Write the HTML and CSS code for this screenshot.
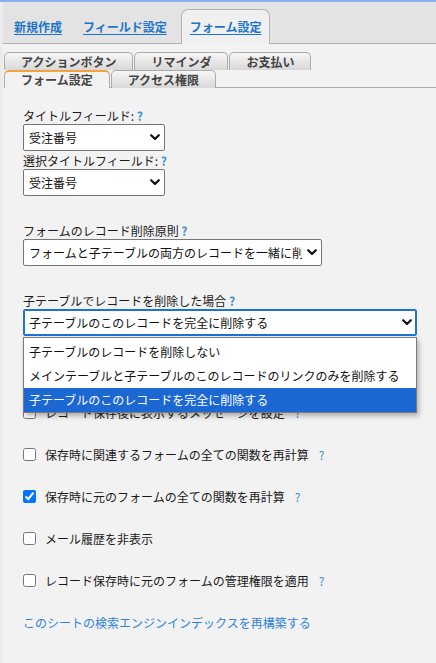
FILE: index.html
```html
<!DOCTYPE html>
<html lang="ja">
<head>
<meta charset="utf-8">
<title>フォーム設定</title>
<link rel="stylesheet" href="styles.css">
</head>
<body>
<div class="topline"></div>
<div class="page">
  <nav class="maintabs">
    <a class="mtab" href="#">新規作成</a>
    <a class="mtab" href="#">フィールド設定</a>
    <a class="mtab active" href="#">フォーム設定</a>
  </nav>

  <div class="subtabs">
    <div class="srow">
      <span class="stab">アクションボタン</span>
      <span class="stab">リマインダ</span>
      <span class="stab">お支払い</span>
    </div>
    <div class="srow srow-last">
      <span class="stab active">フォーム設定</span>
      <span class="stab">アクセス権限</span>
    </div>
  </div>

  <main class="content">
    <div class="field">
      <div class="label">タイトルフィールド: <span class="help">?</span></div>
      <div class="select w-sm"><span class="val">受注番号</span><svg class="chev" width="10" height="7" viewBox="0 0 10 7"><path d="M1.2 1.2 L5 5 L8.8 1.2" fill="none" stroke="#111" stroke-width="2.2" stroke-linecap="round" stroke-linejoin="round"/></svg></div>
      <div class="label label-2">選択タイトルフィールド: <span class="help">?</span></div>
      <div class="select w-sm"><span class="val">受注番号</span><svg class="chev" width="10" height="7" viewBox="0 0 10 7"><path d="M1.2 1.2 L5 5 L8.8 1.2" fill="none" stroke="#111" stroke-width="2.2" stroke-linecap="round" stroke-linejoin="round"/></svg></div>
    </div>

    <div class="field gap">
      <div class="label">フォームのレコード削除原則 <span class="help">?</span></div>
      <div class="select w-md"><span class="val">フォームと子テーブルの両方のレコードを一緒に削除する</span><svg class="chev" width="10" height="7" viewBox="0 0 10 7"><path d="M1.2 1.2 L5 5 L8.8 1.2" fill="none" stroke="#111" stroke-width="2.2" stroke-linecap="round" stroke-linejoin="round"/></svg></div>
    </div>

    <div class="field gap">
      <div class="label">子テーブルでレコードを削除した場合 <span class="help">?</span></div>
      <div class="select-wrap">
        <div class="select w-lg focused"><span class="val">子テーブルのこのレコードを完全に削除する</span><svg class="chev" width="10" height="7" viewBox="0 0 10 7"><path d="M1.2 1.2 L5 5 L8.8 1.2" fill="none" stroke="#111" stroke-width="2.2" stroke-linecap="round" stroke-linejoin="round"/></svg></div>
        <ul class="dropdown">
          <li>子テーブルのレコードを削除しない</li>
          <li>メインテーブルと子テーブルのこのレコードのリンクのみを削除する</li>
          <li class="sel">子テーブルのこのレコードを完全に削除する</li>
        </ul>
      </div>
    </div>

    <div class="checks">
      <label class="check"><input type="checkbox"><span>レコード保存後に表示するメッセージを設定<span class="help">?</span></span></label>
      <label class="check"><input type="checkbox"><span>保存時に関連するフォームの全ての関数を再計算<span class="help">?</span></span></label>
      <label class="check"><input type="checkbox" checked><span>保存時に元のフォームの全ての関数を再計算<span class="help">?</span></span></label>
      <label class="check"><input type="checkbox"><span>メール履歴を非表示</span></label>
      <label class="check"><input type="checkbox"><span>レコード保存時に元のフォームの管理権限を適用<span class="help">?</span></span></label>
    </div>

    <a class="rebuild" href="#">このシートの検索エンジンインデックスを再構築する</a>
  </main>
</div>
</body>
</html>
```

FILE: styles.css
```css
html, body {
  margin: 0;
  padding: 0;
}
body {
  background: #ebebeb;
  font-family: "Noto Sans CJK JP", "Noto Sans", sans-serif;
  font-size: 12px;
  color: #1a1a1a;
  width: 436px;
  height: 663px;
  overflow: hidden;
}
.topline {
  height: 2px;
  background: #86b1ee;
}
.page {
  margin-left: 3px;
  background: #f2f2f2;
  height: 661px;
}

/* main tabs */
.maintabs {
  display: flex;
  align-items: flex-end;
  height: 41px;
  background: #e3e3e3;
  border-bottom: 1px solid #b3b3b3;
  padding-left: 3px;
}
.mtab {
  display: block;
  padding: 0 8px;
  margin-right: 5px;
  line-height: 34px;
  font-weight: bold;
  color: #1b75c9;
  text-decoration: underline;
  text-underline-offset: 2px;
  position: relative;
  top: 1px;
}
.mtab.active {
  margin-left: 1px;
  background: #f0f0f0;
  border: 1px solid #b3b3b3;
  border-bottom: none;
  border-radius: 7px 7px 0 0;
  line-height: 34px;
}

/* sub tabs */
.subtabs {
  margin-top: 8px;
  padding-left: 1px;
}
.srow {
  display: flex;
  gap: 1px;
  height: 18px;
}
.srow-last {
  border-bottom: 1px solid #ababab;
  height: 17px;
}
.stab {
  display: block;
  height: 18px;
  box-sizing: border-box;
  padding: 0 16px;
  border: 1px solid #ababab;
  border-bottom: none;
  border-radius: 5px 5px 0 0;
  background: linear-gradient(#f6f6f6, #d8d8d8);
  font-weight: bold;
  color: #444;
  line-height: 17px;
  white-space: nowrap;
}
.stab.active {
  background: #f2f2f2;
  border-top: 2px solid #f4a33a;
  line-height: 16px;
  position: relative;
  z-index: 1;
}

/* content */
.content {
  padding: 20px 20px 0 20px;
}
.label {
  line-height: 16px;
  height: 16px;
  white-space: nowrap;
}
.label-2 {
  margin-top: 2px;
}
.help {
  color: #3a8fd3;
  font-weight: bold;
}
.field.gap {
  margin-top: 27px;
}
.select {
  position: relative;
  box-sizing: border-box;
  height: 27px;
  border: 1px solid #767676;
  border-radius: 2px;
  background: #fff;
  display: flex;
  align-items: center;
  padding: 0 4px 0 5px;
  color: #111;
}
.select .val {
  flex: 1;
  overflow: hidden;
  white-space: nowrap;
  line-height: 25px;
}
.select .chev {
  flex: none;
  margin-left: 5px;
}
.w-sm { width: 142px; }
.w-md { width: 299px; }
.w-lg { width: 394px; }
.select.focused {
  border-color: #1a73d6;
  box-shadow: inset 0 0 0 1px #1a73d6;
}
.select-wrap {
  position: relative;
}
.dropdown {
  position: absolute;
  top: 28px;
  left: 0;
  width: 394px;
  box-sizing: border-box;
  margin: 0;
  padding: 2px 0 0 0;
  list-style: none;
  background: #fff;
  border: 1px solid #7a7a7a;
  box-shadow: 2px 3px 5px rgba(0, 0, 0, 0.28);
  z-index: 5;
}
.dropdown li {
  height: 24px;
  line-height: 24px;
  padding-left: 5px;
  white-space: nowrap;
  color: #111;
}
.dropdown li.sel {
  background: #1c68d3;
  color: #fff;
}

/* checkboxes */
.checks {
  margin-top: 66px;
  display: flex;
  flex-direction: column;
  gap: 22px;
}
.check {
  display: flex;
  align-items: center;
  height: 20px;
  gap: 9px;
  white-space: nowrap;
}
.check input {
  margin: 0;
  width: 13px;
  height: 13px;
}
.check .help {
  margin-left: 10px;
  font-weight: normal;
}
.rebuild {
  display: block;
  margin-top: 25px;
  line-height: 16px;
  color: #3184d4;
  text-decoration: none;
}
```
